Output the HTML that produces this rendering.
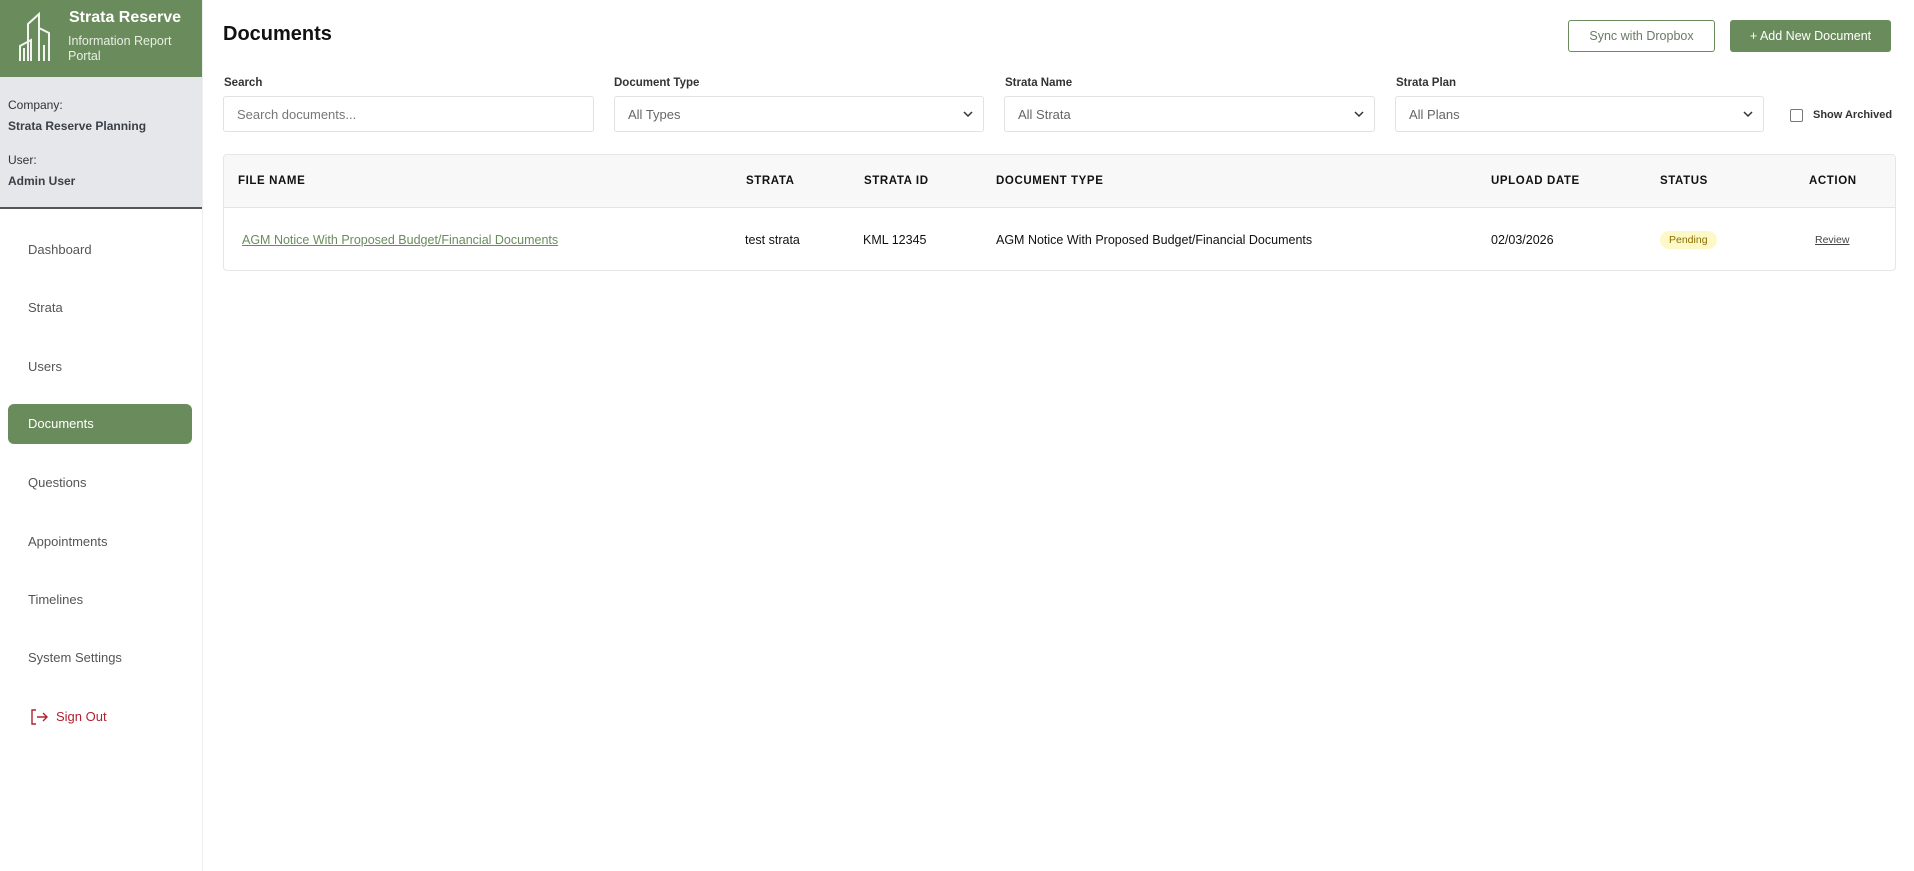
<!DOCTYPE html>
<html><head><meta charset="utf-8"><style>
*{box-sizing:border-box;margin:0;padding:0}
body{width:1914px;height:871px;font-family:"Liberation Sans",Arial,sans-serif;background:#fff;position:relative;overflow:hidden;color:#111}
.side{position:absolute;left:0;top:0;width:203px;height:871px;background:#fff;border-right:1px solid #eee}
.hdr{height:77px;background:#6a8c5c;position:relative;color:#fff}
.hdr .t1{position:absolute;left:69px;top:9px;font-size:16px;font-weight:bold}
.hdr .t2{position:absolute;left:68px;top:34px;font-size:12.5px;line-height:15px;color:#e8efe3}
.info{height:132px;background:#e6e7ea;border-bottom:2px solid #555;padding-left:8px;font-size:12px;color:#333}
.info .l{position:absolute;left:8px}
.nav{position:absolute;left:28px;font-size:13px;color:#555}
.act{position:absolute;left:8px;top:404px;width:184px;height:40px;background:#6a8c5c;border-radius:6px;color:#fff;font-size:13px;padding:12px 0 0 20px}
h1{position:absolute;left:223px;top:23px;font-size:20px;font-weight:bold}
.btn{position:absolute;top:20px;height:32px;border-radius:3px;font-size:12.5px;text-align:center;line-height:30px}
.lbl{position:absolute;top:77px;font-size:11.5px;font-weight:bold;color:#333}
.inp{position:absolute;top:96px;height:36px;border:1px solid #e2e2e2;border-radius:3px;font-size:13px;color:#666;padding:10px 13px}
.inp svg{position:absolute;right:10px;top:14px}
.tbl{position:absolute;left:223px;top:154px;width:1673px;height:117px;border:1px solid #e6e6e6;border-radius:4px;overflow:hidden}
.th{height:53px;background:#f8f8f8;border-bottom:1px solid #e4e4e4}
.c{position:absolute}
.h{top:20px;font-weight:bold;letter-spacing:.6px;font-size:11.5px}
.r{top:78px;font-size:12.5px}
</style></head><body>
<div class="side">
 <div class="hdr">
  <svg style="position:absolute;left:19px;top:11px" width="34" height="52" viewBox="0 0 34 50" fill="none" stroke="#f2f5ef" stroke-width="2">
   <path d="M9 49V12L20 2V49M20 16L30 21V49M1 49V34L12 28V49M5 49V36M25 49V33"/>
  </svg>
  <div class="t1">Strata Reserve</div>
  <div class="t2">Information Report<br>Portal</div>
 </div>
 <div class="info">
  <div class="l" style="top:98px">Company:</div>
  <div class="l" style="top:119px;font-weight:bold;color:#3a3f48">Strata Reserve Planning</div>
  <div class="l" style="top:153px">User:</div>
  <div class="l" style="top:174px;font-weight:bold;color:#3a3f48">Admin User</div>
 </div>
 <div class="nav" style="top:242px">Dashboard</div>
 <div class="nav" style="top:300px">Strata</div>
 <div class="nav" style="top:359px">Users</div>
 <div class="act">Documents</div>
 <div class="nav" style="top:475px">Questions</div>
 <div class="nav" style="top:534px">Appointments</div>
 <div class="nav" style="top:592px">Timelines</div>
 <div class="nav" style="top:650px">System Settings</div>
 <svg style="position:absolute;left:31px;top:709px" width="17" height="16" viewBox="0 0 17 16" fill="none" stroke="#b3202f" stroke-width="1.4"><path d="M5 1H1V15H5M6 8H16M12 4L16 8L12 12"/></svg>
 <div class="nav" style="top:709px;left:56px;color:#b3202f">Sign Out</div>
</div>
<h1>Documents</h1>
<div class="btn" style="left:1568px;width:147px;border:1px solid #6a8c5c;color:#6a7a66">Sync with Dropbox</div>
<div class="btn" style="left:1730px;width:161px;background:#6a8c5c;color:#fff;line-height:32px">+ Add New Document</div>
<div class="lbl" style="left:224px">Search</div>
<div class="lbl" style="left:614px">Document Type</div>
<div class="lbl" style="left:1005px">Strata Name</div>
<div class="lbl" style="left:1396px">Strata Plan</div>
<div class="inp" style="left:223px;width:371px;color:#777">Search documents...</div>
<div class="inp" style="left:614px;width:370px">All Types<svg width="10" height="7"><path d="M1 1L5 5L9 1" stroke="#333" stroke-width="1.5" fill="none"/></svg></div>
<div class="inp" style="left:1004px;width:371px">All Strata<svg width="10" height="7"><path d="M1 1L5 5L9 1" stroke="#333" stroke-width="1.5" fill="none"/></svg></div>
<div class="inp" style="left:1395px;width:369px">All Plans<svg width="10" height="7"><path d="M1 1L5 5L9 1" stroke="#333" stroke-width="1.5" fill="none"/></svg></div>
<div style="position:absolute;left:1790px;top:109px;width:13px;height:13px;border:1px solid #777;border-radius:2px"></div>
<div style="position:absolute;left:1813px;top:109px;font-size:11px;font-weight:bold;color:#333">Show Archived</div>
<div class="tbl">
 <div class="th"></div>
 <div class="c h" style="left:14px">FILE NAME</div>
 <div class="c h" style="left:522px">STRATA</div>
 <div class="c h" style="left:640px">STRATA ID</div>
 <div class="c h" style="left:772px">DOCUMENT TYPE</div>
 <div class="c h" style="left:1267px">UPLOAD DATE</div>
 <div class="c h" style="left:1436px">STATUS</div>
 <div class="c h" style="left:1585px">ACTION</div>
 <div class="c r" style="left:18px;color:#6a8c5c;text-decoration:underline">AGM Notice With Proposed Budget/Financial Documents</div>
 <div class="c r" style="left:521px">test strata</div>
 <div class="c r" style="left:639px">KML 12345</div>
 <div class="c r" style="left:772px">AGM Notice With Proposed Budget/Financial Documents</div>
 <div class="c r" style="left:1267px">02/03/2026</div>
 <div class="c" style="left:1436px;top:76px;font-size:10.5px;color:#8a6d00;background:#fdf8c8;border-radius:10px;padding:3px 9px">Pending</div>
 <div class="c" style="left:1591px;top:79px;font-size:10.5px;color:#444;text-decoration:underline">Review</div>
</div>
</body></html>
